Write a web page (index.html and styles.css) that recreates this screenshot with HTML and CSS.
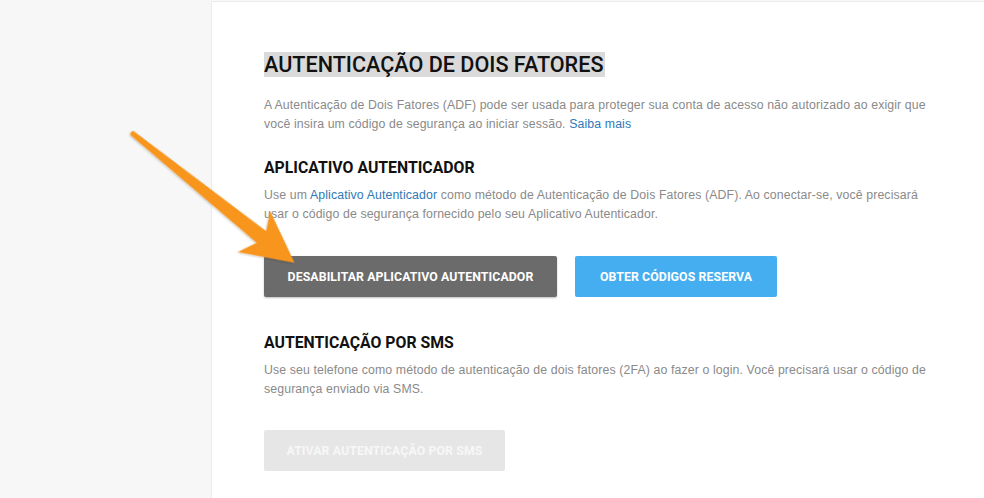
FILE: index.html
```html
<!DOCTYPE html>
<html lang="pt-BR">
<head>
<meta charset="utf-8">
<title>Autenticação de dois fatores</title>
<link rel="stylesheet" href="styles.css">
</head>
<body>
<div class="page">
  <aside class="sidebar"></aside>
  <main class="card">
    <section class="content">
      <h1 class="title"><span class="selected">AUTENTICAÇÃO DE DOIS FATORES</span></h1>
      <p class="desc">A Autenticação de Dois Fatores (ADF) pode ser usada para proteger sua conta de acesso não autorizado ao exigir que você insira um código de segurança ao iniciar sessão. <a href="#" class="link">Saiba mais</a></p>

      <h2 class="subtitle">APLICATIVO AUTENTICADOR</h2>
      <p class="desc">Use um <a href="#" class="link">Aplicativo Autenticador</a> como método de Autenticação de Dois Fatores (ADF). Ao conectar-se, você precisará usar o código de segurança fornecido pelo seu Aplicativo Autenticador.</p>
      <div class="actions">
        <button class="btn btn-dark">DESABILITAR APLICATIVO AUTENTICADOR</button>
        <button class="btn btn-blue">OBTER CÓDIGOS RESERVA</button>
      </div>

      <h2 class="subtitle sms">AUTENTICAÇÃO POR SMS</h2>
      <p class="desc">Use seu telefone como método de autenticação de dois fatores (2FA) ao fazer o login. Você precisará usar o código de segurança enviado via SMS.</p>
      <div class="actions last">
        <button class="btn btn-disabled" disabled>ATIVAR AUTENTICAÇÃO POR SMS</button>
      </div>
    </section>
  </main>
  <svg class="arrow" width="984" height="498" viewBox="0 0 984 498" aria-hidden="true">
    <defs>
      <filter id="sh" x="-20%" y="-20%" width="140%" height="140%">
        <feDropShadow dx="0" dy="1" stdDeviation="1.2" flood-color="#000" flood-opacity="0.25"/>
      </filter>
    </defs>
    <g transform="translate(132 133) rotate(38.6)" filter="url(#sh)">
      <path d="M0,-2.5 Q-2.5,0 0,2.5 L166,8 L157,27 L208,0 L157,-25 L166,-7 Z" fill="#f7951d"/>
    </g>
  </svg>
</div>
</body>
</html>
```

FILE: styles.css
```css
html, body {
  margin: 0;
  padding: 0;
  background: #f7f7f7;
}
body {
  width: 984px;
  height: 498px;
  overflow: hidden;
  font-family: "Liberation Sans", Arial, sans-serif;
}
.page {
  position: relative;
  display: flex;
  width: 984px;
  height: 498px;
}
.sidebar {
  width: 211px;
  flex: none;
  background: #f7f7f7;
}
.card {
  flex: 1;
  background: #fff;
  border-left: 1px solid #ebebeb;
  border-top: 1px solid #ececec;
  margin-top: 1px;
}
.content {
  padding: 49px 0 0 52px;
  width: 668px;
}
.title {
  margin: 0;
  font-family: Roboto, "Liberation Sans", sans-serif;
  font-weight: 500;
  font-size: 21.6px;
  line-height: 28px;
  color: #111;
  letter-spacing: 0;
}
.selected {
  background: #dadada;
  padding: 0 1px 0 0;
}
.desc {
  margin: 0;
  font-size: 12.3px;
  line-height: 19px;
  color: #8a8a8a;
  letter-spacing: 0.12px;
}
.title + .desc {
  margin-top: 17px;
}
.link {
  color: #2f7ab8;
  text-decoration: none;
}
.subtitle {
  margin: 24px 0 8px;
  font-family: Roboto, "Liberation Sans", sans-serif;
  font-weight: 700;
  font-size: 15.8px;
  line-height: 20px;
  color: #111;
}
.subtitle.sms {
  margin-top: 36px;
}
.actions {
  display: flex;
  gap: 18px;
  margin-top: 32px;
}
.actions.last {
  margin-top: 31px;
}
.btn {
  height: 41px;
  border: none;
  border-radius: 2px;
  padding: 0;
  font-family: Roboto, "Liberation Sans", sans-serif;
  font-weight: 700;
  font-size: 12.3px;
  color: #fff;
  letter-spacing: 0.1px;
}
.btn-dark {
  width: 293px;
  background: #6b6b6b;
  box-shadow: 0 1px 2px rgba(0,0,0,0.25);
}
.btn-blue {
  width: 202px;
  background: #45aef0;
}
.btn-disabled {
  width: 241px;
  background: #e6e6e6;
  color: #f7f7f7;
}
.arrow {
  position: absolute;
  left: 0;
  top: 0;
  pointer-events: none;
}
```
